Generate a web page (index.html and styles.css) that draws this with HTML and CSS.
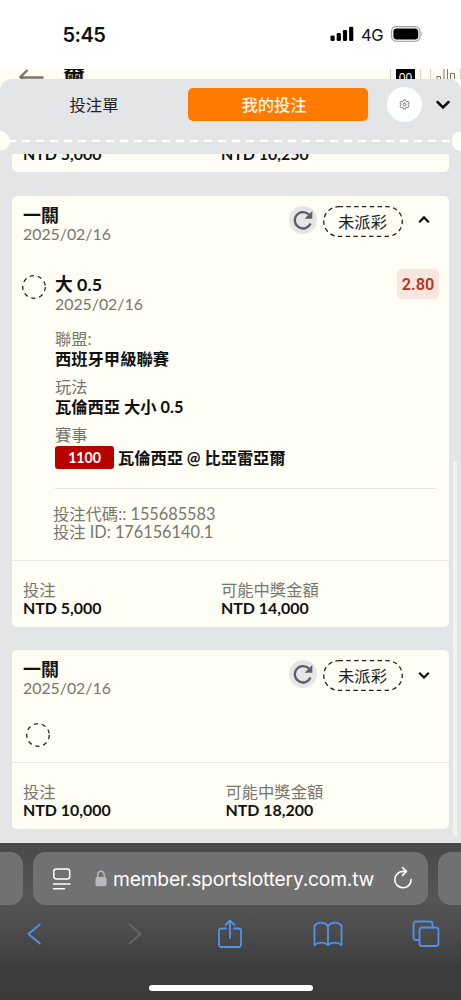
FILE: index.html
```html
<!DOCTYPE html>
<html lang="zh-Hant">
<head>
<meta charset="utf-8">
<title>我的投注</title>
<link rel="stylesheet" href="styles.css">
</head>
<body>
<div class="phone">
  <header class="status">
    <span class="time">5:45</span>
    <svg class="signal" width="24" height="16" viewBox="0 0 24 16"><rect x="0.5" y="9.500" width="4.200" height="5.500" rx="1.200"/><rect x="6.700" y="7" width="4.200" height="8" rx="1.200"/><rect x="12.900" y="4" width="4.200" height="11" rx="1.200"/><rect x="19.100" y="0.800" width="4.200" height="14.200" rx="1.200"/></svg>
    <span class="network">4G</span>
    <svg class="battery" width="33" height="16" viewBox="0 0 33 16"><rect x="0.600" y="0.600" width="28.400" height="14.600" rx="4.600" fill="none" stroke="#999" stroke-width="1.100"/><rect x="2.400" y="2.400" width="24.800" height="11" rx="3.200"/><path d="M30.500 5.500q1.500 2.400 0 4.800z" fill="#888"/></svg>
  </header>
  <div class="pagebar">
    <svg class="back" width="26" height="15" viewBox="0 0 26 15" fill="none" stroke="#76766f" stroke-width="2.400"><path d="M24.500 8.500H2M8.500 1L1.500 8l7 7"/></svg>
    <span class="pagename">爾</span>
    <span class="tool tool-score"><b>00</b></span>
    <span class="tool tool-stats"><svg width="20" height="14" viewBox="0 0 20 14" fill="none" stroke="#77776e"><path d="M1 14V7.500h3.500V14M8 0v14M11.500 0v14M14.500 14V4.500h4V14"/></svg></span>
  </div>
  <main class="panel">
    <nav class="tabs">
      <span class="tab">投注單</span>
      <span class="tab tab-active">我的投注</span>
      <span class="gear"><svg width="11" height="11" viewBox="0 0 24 24" fill="none" stroke="#606060" stroke-width="1.700"><path d="M10 2h4l1 3 2 1 3-.8 2 3.500-2 2.300v2l2 2.300-2 3.500-3-.8-2 1-1 3h-4l-1-3-2-1-3 .8-2-3.500L4 13v-2L2 8.700l2-3.500 3 .8 2-1z"/><rect x="9" y="9" width="6" height="6" rx="2"/></svg></span>
      <svg class="collapse" width="14" height="10" viewBox="0 0 14 10"><path d="M1.500 2L7 7.500 12.500 2"/></svg>
    </nav>
    <div class="perforation"><i class="notch"></i><svg class="dashes" width="461" height="4" viewBox="0 0 461 4"><path d="M8 2H453"/></svg><i class="notch notch-right"></i></div>
    <section class="list">
      <article class="card card-clipped">
        <div class="amounts"><div class="col"><b>NTD 5,000</b></div><div class="col"><b>NTD 10,250</b></div></div>
      </article>
      <article class="card">
        <div class="head">
          <div class="headtext"><h2>一關</h2><p class="date">2025/02/16</p></div>
          <span class="refresh"><svg width="20" height="20" viewBox="0 0 20 20"><path class="arc" d="M17.600 13.500A8.200 8.200 0 1 1 15.800 4.400"/><path class="tip" d="M19.300 1v7.700h-7.700z"/></svg></span>
          <span class="pill"><svg width="80" height="31" viewBox="0 0 80 31"><rect x="0.700" y="0.700" width="78.600" height="29.600" rx="14.800"/></svg><em>未派彩</em></span>
          <svg class="chev" width="12" height="10" viewBox="0 0 12 10"><path d="M1.200 7.200L6 2.400l4.800 4.800"/></svg>
        </div>
        <div class="pick">
          <svg class="ring" width="24" height="24" viewBox="0 0 24 24"><circle cx="12" cy="12" r="11.300"/></svg>
          <div class="picktext"><h3>大 0.5</h3><p class="date">2025/02/16</p></div>
          <span class="odds">2.80</span>
        </div>
        <dl class="info">
          <dt>聯盟:</dt><dd>西班牙甲級聯賽</dd>
          <dt>玩法</dt><dd>瓦倫西亞 大小 0.5</dd>
          <dt>賽事</dt><dd class="match"><span class="code">1100</span><span>瓦倫西亞 @ 比亞雷亞爾</span></dd>
        </dl>
        <div class="ids"><p>投注代碼:: 155685583</p><p>投注 ID: 176156140.1</p></div>
        <div class="amounts"><div class="col"><span>投注</span><b>NTD 5,000</b></div><div class="col"><span>可能中獎金額</span><b>NTD 14,000</b></div></div>
      </article>
      <article class="card card-short">
        <div class="head">
          <div class="headtext"><h2>一關</h2><p class="date">2025/02/16</p></div>
          <span class="refresh"><svg width="20" height="20" viewBox="0 0 20 20"><path class="arc" d="M17.600 13.500A8.200 8.200 0 1 1 15.800 4.400"/><path class="tip" d="M19.300 1v7.700h-7.700z"/></svg></span>
          <span class="pill"><svg width="80" height="31" viewBox="0 0 80 31"><rect x="0.700" y="0.700" width="78.600" height="29.600" rx="14.800"/></svg><em>未派彩</em></span>
          <svg class="chev" width="12" height="10" viewBox="0 0 12 10"><path d="M1.200 3.700L6 8.500l4.800-4.800"/></svg>
        </div>
        <div class="pick pick-empty"><svg class="ring" width="24" height="24" viewBox="0 0 24 24"><circle cx="12" cy="12" r="11.300"/></svg></div>
        <div class="amounts"><div class="col"><span>投注</span><b>NTD 10,000</b></div><div class="col"><span>可能中獎金額</span><b>NTD 18,200</b></div></div>
      </article>
    </section>
    <i class="scrollbar"></i>
  </main>
  <footer class="browser">
    <div class="tabstrip">
      <span class="neighbor neighbor-left"></span>
      <div class="address">
        <svg class="reader" width="20" height="24" viewBox="0 0 20 24" fill="none" stroke="#fff" stroke-width="1.500" stroke-linecap="round"><rect x="1.800" y="2" width="15.900" height="10" rx="2.500"/><path d="M1.500 17H18M1.500 21.800H12.500"/></svg>
        <svg class="lock" width="12" height="17" viewBox="0 0 12 17"><rect x="0.500" y="7" width="11" height="9.300" rx="1.800" fill="#b9b8bd"/><path d="M2.700 8V5a3.300 3.800 0 0 1 6.600 0v3" fill="none" stroke="#b9b8bd" stroke-width="1.500"/></svg>
        <span class="url">member.sportslottery.com.tw</span>
        <svg class="reload" width="20" height="24" viewBox="0 0 20 24" fill="none" stroke="#fff" stroke-width="1.600" stroke-linecap="round" stroke-linejoin="round"><path d="M18.200 13.500A8.200 8.200 0 1 1 10 5.400h3M9.500 1.500l4 3.900-4 4"/></svg>
      </div>
      <span class="neighbor neighbor-right"></span>
    </div>
    <div class="toolbar">
      <svg width="14" height="28" viewBox="0 0 14 28"><path d="M12.800 4.500L1.500 14l11.300 9.500"/></svg>
      <svg class="disabled" width="14" height="28" viewBox="0 0 14 28"><path d="M2.500 4.500L13.300 14 2.500 23.500"/></svg>
      <svg width="26" height="30" viewBox="0 0 26 30"><path d="M9 9.500H4.500a2.500 2.500 0 0 0-2.500 2.500v13.500A2.500 2.500 0 0 0 4.500 28h17a2.500 2.500 0 0 0 2.500-2.500V12a2.500 2.500 0 0 0-2.500-2.500H17M13 19V2M8.500 6L13 1.500 17.500 6"/></svg>
      <svg width="30" height="26" viewBox="0 0 30 26"><path d="M15 5C11.500 0.500 5 .8 1.500 4.500V24c4-3.300 10-3 13.500 0 3.500-3 9.500-3.300 13.500 0V4.500C25 .8 18.500.500 15 5zV24"/></svg>
      <svg width="28" height="28" viewBox="0 0 28 28"><path d="M7.500 20H4a2.500 2.500 0 0 1-2.500-2.500V4A2.500 2.500 0 0 1 4 1.500h14A2.500 2.500 0 0 1 20.500 4v3.500"/><rect x="7.500" y="7.500" width="19" height="18.500" rx="2.500"/></svg>
    </div>
    <i class="home"></i>
  </footer>
</div>
</body>
</html>
```
FILE: styles.css
```css
* { box-sizing: border-box; margin: 0; padding: 0; }
body { background: #fff; }
.phone {
  width: 461px; height: 1000px; overflow: hidden; display: flex; flex-direction: column;
  background: #fffdf5; color: #111; white-space: nowrap;
  font: 16.3px/18px Lato, "Noto Sans CJK TC", sans-serif;
}
i, em { font-style: normal; }
svg { display: block; flex: none; }

.status { height: 69px; flex: none; background: #fff; display: flex; align-items: center; padding-left: 62.500px; font-family: Inter, sans-serif; }
.time { font-size: 20px; font-weight: 600; width: 267.500px; letter-spacing: -0.5px; }
.signal { margin-top: -1px; }
.network { font-size: 16.500px; margin-left: 7px; width: 30px; letter-spacing: -0.3px; }
.battery { margin-top: -1px; }

.pagebar { height: 10px; flex: none; overflow: hidden; display: flex; align-items: flex-start; padding-left: 19px; background: #fffdf3; }
.back { margin-top: -0.500px; }
.pagename { margin: -3px 0 0 18px; width: 327px; font-size: 22px; line-height: 22px; font-weight: 700; }
.tool { width: 31px; height: 20px; border: 1px solid #d4d2ca; border-width: 0 1px; display: flex; justify-content: center; flex: none; }
.tool b { background: #000; color: #fff; width: 19px; height: 20px; font: 12px/18px "Liberation Sans", sans-serif; text-align: center; }
.tool-stats { margin-left: 9px; }

.panel { height: 764px; flex: none; position: relative; background: #e4e5e7; border-radius: 12px 12px 0 0; display: flex; flex-direction: column; }
.tabs { height: 51px; display: flex; align-items: center; }
.tab { width: 188px; text-align: center; font-size: 16.300px; color: #222; }
.tab-active { width: 180px; height: 33px; line-height: 33px; border-radius: 5px; background: #ff7a00; color: #fff8e8; font-weight: 500; margin-right: 19px; padding-right: 8px; }
.gear { width: 35px; height: 35px; border-radius: 50%; background: #fff; display: grid; place-items: center; }
.collapse { margin-left: 14px; fill: none; stroke: #111; stroke-width: 2.500; stroke-linecap: round; }
.perforation { height: 24px; flex: none; display: flex; align-items: center; margin: -1px 0 1px; }
.notch { width: 10px; height: 20px; background: #fffdf5; border-radius: 0 10px 10px 0; flex: none; }
.notch-right { border-radius: 10px 0 0 10px; width: 9px; }
.dashes { margin: 0 -9px 0 -10px; stroke: #fff; stroke-width: 2.500; stroke-dasharray: 8 6; }

.list { height: 689px; overflow: hidden; padding: 0 12px; display: flex; flex-direction: column; }
.card { background: #fffef5; border-radius: 5px; flex: none; width: 437px; height: 431px; margin-bottom: 23px; display: flex; flex-direction: column; }
.card-clipped { height: 18px; margin-bottom: 24px; border-radius: 0 0 5px 5px; overflow: hidden; }
.card-short { height: 179px; }
.head { display: flex; height: 51px; padding: 9px 0 0 11px; }
.headtext { width: 265.500px; }
h2 { font-size: 18px; line-height: 20px; font-weight: 700; }
.date { color: #77766f; font-size: 15.850px; }
.refresh { width: 28px; height: 28px; margin-top: 1px; border-radius: 50%; background: #e5e6e8; display: grid; place-items: center; }
.arc { fill: none; stroke: #5c5e62; stroke-width: 2.300; }
.tip { fill: #5c5e62; }
.pill { width: 80px; height: 31px; margin: 1px 0 0 6px; display: grid; place-items: center; }
.pill > * { grid-area: 1 / 1; }
.pill rect { fill: none; stroke: #222; stroke-width: 1.300; stroke-dasharray: 4.500 3.300; }
.pill em { color: #222; padding-top: 1px; }
.chev { margin: 10px 0 0 15.500px; fill: none; stroke: #111; stroke-width: 2.200; }
.pick { height: 80px; padding: 22px 10px 0 10px; display: flex; }
.ring { margin-top: 6px; fill: none; stroke: #222; stroke-width: 1.300; }
.ring circle { stroke-dasharray: 4.200 3.900; }
.picktext { margin-left: 9px; flex: 1; padding-top: 5px; }
.picktext .date { margin-top: 1px; }
h3 { font-size: 17.800px; line-height: 20px; font-weight: 700; }
.odds { width: 42px; height: 30px; border-radius: 5px; background: #f8e6df; color: #b7332b; font: 600 16.300px/31px Roboto, sans-serif; text-align: center; }
.info { margin: 3px 13px 0 43px; height: 159px; border-bottom: 1px solid #e5e4df; }
dt { color: #77766f; line-height: 18px; }
dd { font-weight: 700; line-height: 20px; margin: 1px 0 9px; }
.match { display: flex; align-items: center; margin-top: 2px; height: 23px; letter-spacing: -0.050px; }
.code { width: 59px; height: 23px; line-height: 23px; border-radius: 3px; background: #b80000; color: #fff; font-size: 14.200px; text-align: center; margin-right: 4px; }
.ids { color: #77766f; height: 71px; padding: 16px 0 0 41px; }
.amounts { border-top: 1px solid #e9e8e2; height: 67px; padding: 20px 0 0 11px; display: flex; }
.col { width: 198px; display: flex; flex-direction: column; }
.col span { color: #77766f; }
.col b { font-weight: 700; font-size: 15.950px; }
.pick-empty { height: 61px; padding: 16px 0 0 14px; }
.card-short .col { width: 202.500px; }
.card-clipped .amounts { border: 0; padding-top: 0; margin-top: -9px; }
.scrollbar { position: absolute; right: 4px; top: 382px; width: 4px; height: 376px; border-radius: 2px; background: #f2f2f3; }

.browser { flex: 1; background: linear-gradient(#494949 0, #555 55px, #4d4d4d 85px, #3d3d3d 125px, #3b3b3b); padding-top: 9px; display: flex; flex-direction: column; }
.tabstrip { height: 53px; display: flex; gap: 10px; }
.neighbor { width: 23px; background: #717171; flex: none; }
.neighbor-left { border-radius: 0 13px 13px 0; }
.neighbor-right { border-radius: 13px 0 0 13px; }
.address { width: 395px; flex: none; background: #717171; border-radius: 13px; display: flex; align-items: center; padding-left: 19px; }
.lock { margin: 0 6px 0 23px; }
.url { width: 279.500px; color: #fff; font: 19.300px/24px Inter, sans-serif; letter-spacing: -0.220px; }
.reload { margin-top: -2px; }
.toolbar { height: 57px; margin: 0 -15px; display: grid; grid-template-columns: repeat(5, 98px); place-items: center; fill: none; stroke: #4f91ee; stroke-width: 1.800; stroke-linejoin: round; stroke-linecap: round; }
.disabled { stroke: #68686a; margin-left: 3px; }
.home { width: 164px; height: 6px; border-radius: 3px; background: #fff; margin: 23px 0 0 149px; }
```
